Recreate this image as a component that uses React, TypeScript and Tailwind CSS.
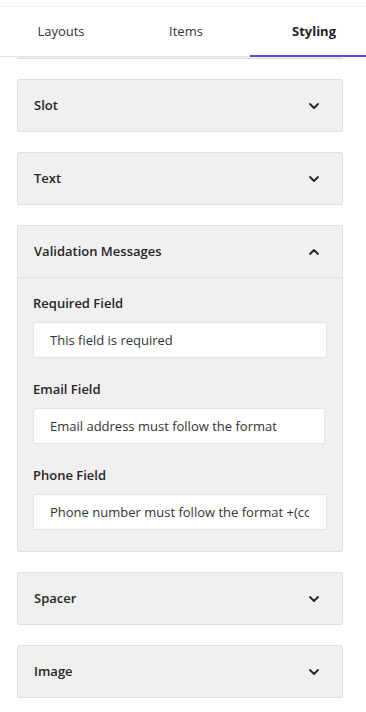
import React from "react";
import { ChevronDown, ChevronUp } from "lucide-react";

const tabs = [
  { label: "Layouts", width: "w-[122px]", active: false },
  { label: "Items", width: "w-[128px]", active: false },
  { label: "Styling", width: "w-[128px]", active: true },
];

function CollapsedSection({ title }: { title: string }) {
  return (
    <div className="flex h-[53px] items-center justify-between rounded-[2px] border border-[#e0e0e0] bg-[#f0f0f0] pl-4 pr-5">
      <span className="font-semibold text-[#262626]">{title}</span>
      <ChevronDown size={16} strokeWidth={2.75} className="text-[#242424]" />
    </div>
  );
}

function Field({
  label,
  value,
  inputWidth = "w-full",
}: {
  label: string;
  value: string;
  inputWidth?: string;
}) {
  return (
    <div>
      <div className="mb-[9px] h-5 leading-5 font-semibold text-[#262626]">{label}</div>
      <div
        className={`${inputWidth} h-9 rounded-[2px] border border-[#e4e4e4] bg-white pl-4 pr-[17px]`}
      >
        <div className="w-full overflow-hidden whitespace-nowrap leading-[34px] text-[13px] text-[#333]">
          {value}
        </div>
      </div>
    </div>
  );
}

export default function App() {
  return (
    <div className="min-h-screen w-[366px] overflow-hidden bg-white font-['Open_Sans',sans-serif] text-[13px]">
      <div className="h-[6px]" />
      <div className="flex h-[51px] border-y border-t-[#f2f2f2] border-b-[#e2e2e2]">
        {tabs.map((tab) => (
          <div
            key={tab.label}
            className={`relative flex shrink-0 ${tab.width} items-center justify-center ${
              tab.active ? "font-bold text-[#1f1f1f]" : "text-[#333]"
            }`}
          >
            {tab.label}
            {tab.active && (
              <span className="absolute bottom-[-1px] left-0 right-0 h-[2px] bg-[#5b4ddb]" />
            )}
          </div>
        ))}
      </div>

      {/* bottom of the section scrolled out of view */}
      <div className="ml-[17px] h-[2px] w-[326px] border-b border-[#dedede] bg-[#f0f0f0]" />

      <div className="ml-[17px] mt-5 flex w-[326px] flex-col gap-5">
        <CollapsedSection title="Slot" />
        <CollapsedSection title="Text" />

        <div className="rounded-[2px] border border-[#e0e0e0] bg-[#f0f0f0]">
          <div className="flex h-[52px] items-center justify-between border-b border-[#e0e0e0] pl-4 pr-5">
            <span className="font-semibold text-[#262626]">Validation Messages</span>
            <ChevronUp size={16} strokeWidth={2.75} className="text-[#242424]" />
          </div>
          <div className="flex flex-col gap-[21px] px-[15px] pt-[15px] pb-[21px]">
            <Field label="Required Field" value="This field is required" />
            <Field
              label="Email Field"
              value="Email address must follow the format"
              inputWidth="w-[292px]"
            />
            <Field
              label="Phone Field"
              value="Phone number must follow the format +(country code)(area code)(number)"
            />
          </div>
        </div>

        <CollapsedSection title="Spacer" />
        <CollapsedSection title="Image" />
      </div>
    </div>
  );
}
